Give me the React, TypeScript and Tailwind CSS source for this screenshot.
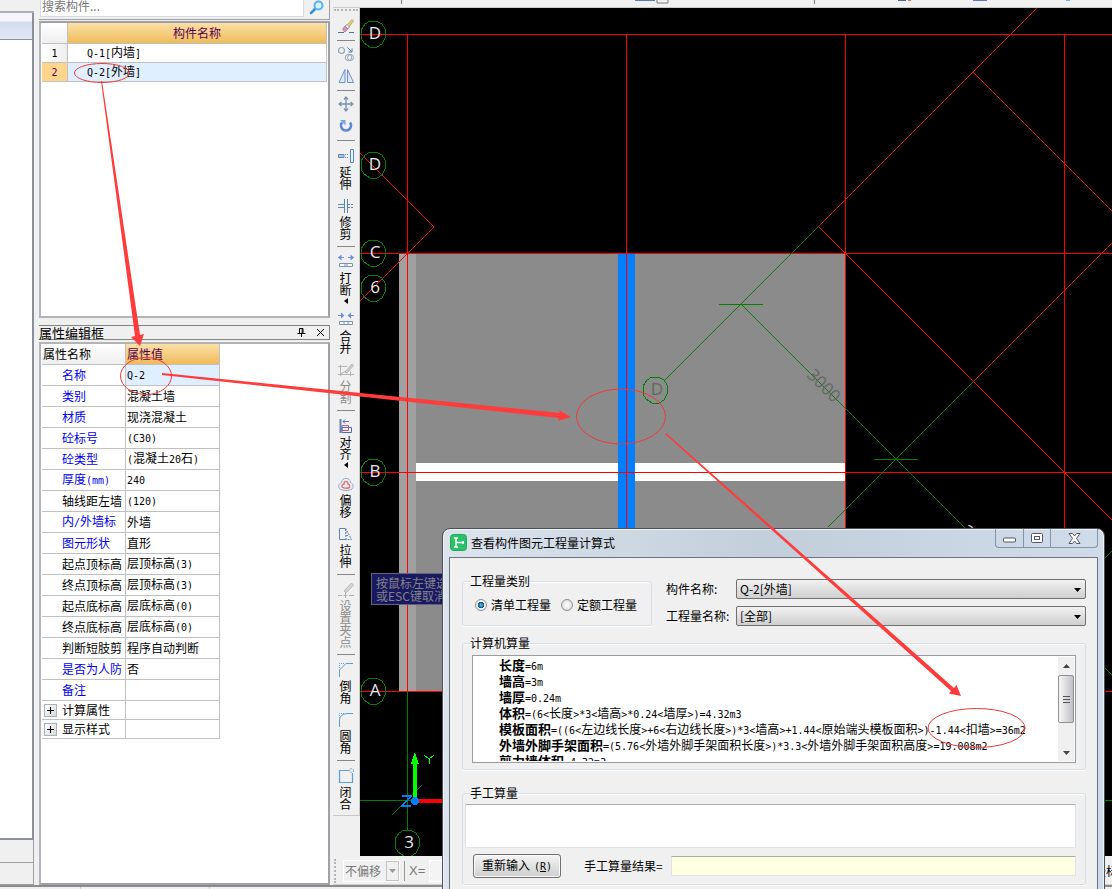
import { useState, type ReactNode } from "react";

type PropertyRow = {
  name: string;
  value: string;
  tone: "blue" | "black";
};

const components = ["Q-1[内墙]", "Q-2[外墙]"];

const properties: PropertyRow[] = [
  { name: "名称", value: "Q-2", tone: "blue" },
  { name: "类别", value: "混凝土墙", tone: "blue" },
  { name: "材质", value: "现浇混凝土", tone: "blue" },
  { name: "砼标号", value: "(C30)", tone: "blue" },
  { name: "砼类型", value: "(混凝土20石)", tone: "blue" },
  { name: "厚度(mm)", value: "240", tone: "blue" },
  { name: "轴线距左墙", value: "(120)", tone: "black" },
  { name: "内/外墙标", value: "外墙", tone: "blue" },
  { name: "图元形状", value: "直形", tone: "blue" },
  { name: "起点顶标高", value: "层顶标高(3)", tone: "black" },
  { name: "终点顶标高", value: "层顶标高(3)", tone: "black" },
  { name: "起点底标高", value: "层底标高(0)", tone: "black" },
  { name: "终点底标高", value: "层底标高(0)", tone: "black" },
  { name: "判断短肢剪", value: "程序自动判断", tone: "black" },
  { name: "是否为人防", value: "否", tone: "blue" },
  { name: "备注", value: "", tone: "blue" },
];

const propertyGroups = ["计算属性", "显示样式"];

const formulas = [
  { label: "长度", expression: "=6m" },
  { label: "墙高", expression: "=3m" },
  { label: "墙厚", expression: "=0.24m" },
  { label: "体积", expression: "=(6<长度>*3<墙高>*0.24<墙厚>)=4.32m3" },
  {
    label: "模板面积",
    expression: "=((6<左边线长度>+6<右边线长度>)*3<墙高>+1.44<原始端头模板面积>)-1.44<扣墙>=36m2",
  },
  {
    label: "外墙外脚手架面积",
    expression: "=(5.76<外墙外脚手架面积长度>)*3.3<外墙外脚手架面积高度>=19.008m2",
  },
  { label: "剪力墙体积", expression: "=4.32m3" },
];

export default function App() {
  return (
    <div className="relative flex h-screen flex-col overflow-hidden bg-[#f0f0f0] font-['Noto_Sans_CJK_SC',sans-serif] text-xs leading-4 text-black">
      <div className="flex min-h-0 flex-1">
        <NavigatorEdge />
        <aside className="ml-[5px] flex w-[291px] shrink-0 flex-col">
          <ComponentList />
          <PropertyEditor />
        </aside>
        <main className="ml-[3px] flex min-w-0 flex-1 flex-col">
          <TopStrip />
          <div className="flex min-h-0 flex-1">
            <EditToolbar />
            <DrawingCanvas />
          </div>
          <OffsetBar />
        </main>
      </div>
      <div className="flex h-1 shrink-0 gap-32 border-t-2 border-[#8c8c8c] bg-[#f0f0f0] pl-20">
        <span className="w-px bg-[#c8c8c8]" />
        <span className="w-px bg-[#c8c8c8]" />
      </div>
      <FormulaDialog />
      <Annotations />
    </div>
  );
}

// Latin runs use a half-width mono face so that they line up with the CJK grid
function Mixed({ text }: { text: string }) {
  return (
    <>
      {text.split(/([\x20-\x7e]+)/).map((part, index) =>
        index % 2 === 1 ? (
          <span key={index} className="font-['DejaVu_Sans_Mono',monospace] text-[10px]">
            {part}
          </span>
        ) : (
          part
        )
      )}
    </>
  );
}

function NavigatorEdge() {
  return (
    <div className="flex w-[34px] shrink-0 flex-col">
      <div className="h-[13px] border-b-2 border-[#b0b0b0]" />
      <div className="h-[27px] border-r-2 border-b border-[#8a8f99] bg-linear-to-b from-[#f4f6fb] from-30% via-[#d3dcee] via-35% to-[#e2e7f4]" />
      <div className="flex-1 border-r-2 border-b-2 border-[#8a8f99] bg-white" />
      <div className="h-[23px] border-r border-b border-[#a0a0a0]" />
      <div className="h-[22px] border-r border-b border-[#a0a0a0]" />
    </div>
  );
}

function ComponentList() {
  const [selected, setSelected] = useState(1);

  return (
    <>
      <div className="flex h-5 shrink-0 border-r border-b border-[#a0a0a0]">
        <input
          aria-label="搜索构件"
          placeholder="搜索构件..."
          className="mb-[2px] ml-px w-[264px] border border-t-0 border-[#d5dbe3] bg-white px-px pb-[6px] leading-3 outline-none placeholder:text-[#777]"
        />
        <button type="button" aria-label="搜索" className="flex flex-1 items-start justify-center">
          <svg width="16" height="15" viewBox="0 0 16 15" fill="none">
            <path d="M6.5 8.5 L2 13" stroke="#3b8fd9" strokeWidth="2.6" strokeLinecap="round" />
            <circle cx="9.5" cy="5.5" r="4" fill="#d9f1ff" stroke="#56b3ee" strokeWidth="2" />
          </svg>
        </button>
      </div>
      <div className="mt-px h-[297px] shrink-0 border-2 border-[#a0a0a6] border-b-[#b4b4b4] border-l-[#b4b4bc] bg-white px-px">
        <table className="w-full border-separate border-spacing-0">
          <thead>
            <tr className="h-[21px]">
              <th className="w-[26px] border-r border-b border-[#c0c0c0] bg-linear-to-b from-white to-[#eeeeee] p-0" />
              <th className="border-r border-b border-[#c0c0c0] bg-linear-to-b from-[#fae0a6] to-[#f0bb5a] p-0 font-normal text-[#550055]">
                构件名称
              </th>
            </tr>
          </thead>
          <tbody>
            {components.map((component, index) => (
              <tr key={component} className="h-[19px]" onClick={() => setSelected(index)}>
                <td
                  className={
                    index === selected
                      ? "border-r border-b border-[#c0c0c0] bg-[#ffd58c] p-0 text-center text-[#550055]"
                      : "border-r border-b border-[#c0c0c0] bg-linear-to-r from-white to-[#eeeeee] p-0 text-center"
                  }
                >
                  <Mixed text={String(index + 1)} />
                </td>
                <td
                  className={
                    index === selected
                      ? "border-r border-b border-[#c0c0c0] bg-[#e0efff] py-0 pl-[19px]"
                      : "border-r border-b border-[#c0c0c0] py-0 pl-[19px]"
                  }
                >
                  <Mixed text={component} />
                </td>
              </tr>
            ))}
          </tbody>
        </table>
      </div>
    </>
  );
}

function PropertyEditor() {
  return (
    <>
      <div className="mt-[7px] flex h-[15px] shrink-0 items-center border border-l-0 border-[#7f857f]">
        <h2 className="flex-1 text-[13px] leading-3">属性编辑框</h2>
        <button type="button" aria-label="固定" className="mr-2 p-px">
          <svg width="9" height="9" viewBox="0 0 9 9" fill="none" stroke="#000">
            <path d="M2.5 0.5 H6 M2.5 0.5 V5 M6 0.5 V5 M5.2 0.5 V5 M0.5 5.5 H8.5 M4.5 6 V9" />
          </svg>
        </button>
        <button type="button" aria-label="关闭" className="mr-[3px] p-px">
          <svg width="9" height="9" viewBox="0 0 9 9" stroke="#000">
            <path d="M1 1 L8 8 M8 1 L1 8" />
          </svg>
        </button>
      </div>
      <div className="mt-[2px] min-h-0 flex-1 overflow-hidden border-2 border-[#a0a0a6] border-t-[#b4b4b4] border-l-[#b4b4bc] bg-white pl-px">
        <table className="w-[178px] table-fixed border-separate border-spacing-0 whitespace-nowrap">
          <thead>
            <tr className="h-[21px] text-left">
              <th className="w-[84px] border-r border-b border-[#c0c0c0] bg-linear-to-b from-white to-[#eeeeee] p-0 pl-px font-normal">
                属性名称
              </th>
              <th className="border-r border-b border-[#c0c0c0] bg-linear-to-b from-[#fae0a6] to-[#f0bb5a] p-0 pl-px font-normal text-[#550055]">
                属性值
              </th>
            </tr>
          </thead>
          <tbody>
            {properties.map((property, index) => (
              <tr key={property.name} className="h-[21px]">
                <td
                  className={
                    property.tone === "blue"
                      ? "border-r border-b border-[#c0c0c0] py-0 pl-5 text-[#0000f0]"
                      : "border-r border-b border-[#c0c0c0] py-0 pl-5"
                  }
                >
                  <Mixed text={property.name} />
                </td>
                <td
                  className={
                    index === 0
                      ? "border-r border-b border-[#c0c0c0] bg-[#e0efff] py-0 pl-px"
                      : "border-r border-b border-[#c0c0c0] py-0 pl-px"
                  }
                >
                  <Mixed text={property.value} />
                </td>
              </tr>
            ))}
            {propertyGroups.map((group) => (
              <tr key={group} className="h-[19px]">
                <td className="border-r border-b border-[#c0c0c0] p-0">
                  <div className="flex items-center gap-[5px] pl-[2px]">
                    <button
                      type="button"
                      aria-label={`展开${group}`}
                      className="flex size-[13px] items-center justify-center border border-[#a8b0b8] bg-linear-to-br from-white to-[#d8d8d8]"
                    >
                      <svg width="7" height="7" viewBox="0 0 7 7" stroke="#000">
                        <path d="M0 3.5 H7 M3.5 0 V7" />
                      </svg>
                    </button>
                    {group}
                  </div>
                </td>
                <td className="border-r border-b border-[#c0c0c0] p-0" />
              </tr>
            ))}
          </tbody>
        </table>
      </div>
    </>
  );
}

function TopStrip() {
  return (
    <div className="h-2 shrink-0 border-b border-[#c8c8c8]">
      <svg width="100%" height="6">
        <path d="M68.5 0 V4 M481.5 0 V4" stroke="#7a7a7a" />
        <path d="M324 0 V3 H335 V0" fill="none" stroke="#7a7a7a" />
        <path d="M302 0.5 H322 M640 0.5 H654" stroke="#5b7cae" />
        <path d="M565 0.5 H573" stroke="#4b66a0" />
        <path d="M575 0.5 H578" stroke="#c07a70" />
        <path d="M733 0.5 H737" stroke="#6fb0e0" />
      </svg>
    </div>
  );
}

function ToolIcon({ children }: { children: ReactNode }) {
  return (
    <svg width="16" height="16" viewBox="0 0 16 16" fill="none" stroke="#5c86b8" className="shrink-0">
      {children}
    </svg>
  );
}

function IconTool({ label, children }: { label: string; children: ReactNode }) {
  return (
    <button type="button" aria-label={label} className="flex h-[22px] items-center">
      <ToolIcon>{children}</ToolIcon>
    </button>
  );
}

function TextTool({
  label,
  disabled,
  menu,
  children,
}: {
  label: string;
  disabled?: boolean;
  menu?: boolean;
  children: ReactNode;
}) {
  return (
    <button
      type="button"
      disabled={disabled}
      className="flex flex-col items-center gap-[2px] pt-[5px] pb-[3px] disabled:text-[#8c8c8c]"
    >
      <ToolIcon>{children}</ToolIcon>
      <span className="mr-[2px] [writing-mode:vertical-rl]">{label}</span>
      {menu ? (
        <svg width="4" height="6" viewBox="0 0 4 6">
          <path d="M4 0 V6 L0 3 Z" fill="#000" />
        </svg>
      ) : null}
    </button>
  );
}

function Divider() {
  return (
    <div className="flex h-[6px] w-full shrink-0 items-center px-1">
      <span className="h-px w-full bg-[#858585]" />
    </div>
  );
}

function EditToolbar() {
  return (
    <div className="flex w-[27px] shrink-0 flex-col">
      <div className="flex flex-col items-center border-r border-b border-[#c8c8c8] pb-[2px]">
        <div className="mt-px mb-1 h-[2px] w-6 border-t-2 border-dotted border-[#b4b4b4]" />
        <IconTool label="删除">
          <path d="M0 14.5 H6 M11 14.5 H16" stroke="#55719c" />
          <path d="M9 7 L14 1.5 L15.5 3 L11 9 Z" fill="#f0cf62" stroke="#a8905a" strokeWidth="0.7" />
          <path d="M7 8 L9 6.5 L11.5 9 L10 11 Z" fill="#e8eef6" stroke="#7f95b5" strokeWidth="0.8" />
          <path d="M4.5 11 L7 8 L10 11 L7.5 13.5 H6 Z" fill="#e58ab0" stroke="#8f6fa0" strokeWidth="0.6" />
        </IconTool>
        <Divider />
        <IconTool label="复制">
          <circle cx="3.5" cy="4.5" r="3" stroke="#8fa3ba" strokeWidth="1.2" />
          <circle cx="10.5" cy="11.5" r="3.2" stroke="#8fa3ba" />
          <circle cx="12.5" cy="11.5" r="3" stroke="#8fa3ba" />
          <path d="M9.500 1.500 L13.500 5.500 M14 2.500 V6 H10.500" stroke="#4f74b8" />
        </IconTool>
        <IconTool label="镜像">
          <path d="M7 1.500 V14.500 H1 Z M9.500 1.500 V14.500 H15.500 Z" fill="#dfe9f7" stroke="#6d8fcc" />
        </IconTool>
        <Divider />
        <IconTool label="移动">
          <path
            d="M8 1 V15 M1 8 H15 M6 3.500 L8 1 L10 3.500 M6 12.500 L8 15 L10 12.500 M3.500 6 L1 8 L3.500 10 M12.500 6 L15 8 L12.500 10"
            stroke="#7893b4"
            strokeWidth="1.3"
          />
        </IconTool>
        <IconTool label="旋转">
          <path d="M12 4.500 A5 5 0 1 1 4 4.500" stroke="#5c86d8" strokeWidth="2.600" />
          <path d="M2 2 H7.500 V7.500 Z" fill="#7ea2e0" stroke="none" />
        </IconTool>
        <Divider />
        <TextTool label="延伸">
          <path d="M0.500 6.500 H6 V9.500 H0.500 Z" fill="#a8c8ec" />
          <path d="M7 6.500 H11 M7 9.500 H11" strokeDasharray="1 1" />
          <path d="M12.500 1.500 H15.500 V14.500 H12.500 Z" fill="#e8f1fb" />
        </TextTool>
        <TextTool label="修剪">
          <path d="M0 6.500 H6 M0 9.500 H6" />
          <path d="M6.500 1 V15 M9.500 1 V15" />
          <path d="M10 6.500 H16 M10 9.500 H16" strokeDasharray="2 1" />
        </TextTool>
        <Divider />
        <TextTool label="打断" menu>
          <path d="M0 3.500 H6 M10 3.500 H16" stroke="#6c8fd8" />
          <path d="M3.500 0.500 V6.500 L0 3.500 Z M12.500 0.500 V6.500 L16 3.500 Z" fill="#6c8fd8" stroke="none" />
          <path d="M1.500 9.500 H14.500 V12.500 H1.500 Z M7 9.500 V12.500 M9 9.500 V12.500" fill="#fff" stroke="#7893b4" />
        </TextTool>
        <TextTool label="合并">
          <path d="M0 3.500 H6 M10 3.500 H16" stroke="#6c8fd8" />
          <path d="M3 0.500 V6.500 L6.500 3.500 Z M13 0.500 V6.500 L9.500 3.500 Z" fill="#6c8fd8" stroke="none" />
          <path d="M1.500 9.500 H14.500 V12.500 H1.500 Z M6 9.500 V12.500 M10 9.500 V12.500" fill="#fff" stroke="#7893b4" />
        </TextTool>
        <TextTool label="分割" disabled>
          <path d="M0 4.500 H9 M0 12.500 H16 M2.500 3 V14 M12.500 9 V14 M2.500 12 L8 9" stroke="#b4b4b4" />
          <path d="M7 10 L14 2 L15.500 3.500 L9 11 Z" fill="#d0d0d0" stroke="#b4b4b4" />
        </TextTool>
        <Divider />
        <TextTool label="对齐" menu>
          <path d="M2.500 1 V15" strokeWidth="2" />
          <path d="M5 3.500 H11 M7 1.500 L5 3.500 L7 5.500" stroke="#5c6fc0" />
          <path d="M4 7.500 H10.500 V12.500 H4 Z" stroke="#c05a6a" />
          <path d="M4 9.500 H13.500 V14.500 H4 Z" stroke="#4f68c0" />
        </TextTool>
        <TextTool label="偏移">
          <path d="M1.500 12.500 C-0.500 9.500 2 7 3.500 6.500 C4 1 12 1 12.500 6.500 C15.500 8 15.500 11 14 13 C11 15 4 15 1.500 12.500 Z" stroke="#8aa8cc" />
          <path d="M4 11 C3.500 9 5 8 6 8 C6 4.500 10 4.500 10 8 C12 8.500 12 10.500 11.500 11.500 C9 12.500 6 12.500 4 11 Z" fill="#fbe6e6" stroke="#d87a80" strokeWidth="1.400" />
        </TextTool>
        <TextTool label="拉伸">
          <path d="M7 2.500 H1.500 V13.500 H8" />
          <path d="M7.500 2 L13.500 13.500 H8 Z M8 6 H9 M8 9.500 H11" strokeDasharray="2 1" />
        </TextTool>
        <Divider />
        <TextTool label="设置夹点" disabled>
          <path d="M0 13.500 H4 M11 13.500 H16 M7.500 10 V16 M5.500 13.500 H9.500" stroke="#b0b0b0" />
          <path d="M6 9 L13.500 1 L15.500 3 L8.500 10.500 Z" fill="#d4d4d4" stroke="#b8b8b8" />
        </TextTool>
        <Divider />
        <TextTool label="倒角">
          <path d="M1.500 15 V8 L8 1.500 H15" stroke="#5b9fd8" />
          <path d="M1.500 6 V1.500 H7" stroke="#5b9fd8" strokeDasharray="1 1" />
        </TextTool>
        <TextTool label="圆角">
          <path d="M1.500 15 V8 Q2 2 9 1.500 H15" stroke="#5b9fd8" />
          <path d="M1.500 6 V1.500 H7" stroke="#5b9fd8" strokeDasharray="1 1" />
        </TextTool>
        <Divider />
        <TextTool label="闭合">
          <path d="M11 2.500 H1.500 V14.500 H14.500 V5" stroke="#5b9fd8" strokeWidth="1.200" />
          <circle cx="13.500" cy="2.500" r="2" stroke="#5b9fd8" strokeDasharray="1.500 1" />
        </TextTool>
      </div>
    </div>
  );
}

function AxisBubble({ x, y, label, dim }: { x: number; y: number; label: string; dim?: boolean }) {
  return (
    <g>
      <path
        d={`M${x - 12} ${y - 4} l4 -6 l5 -3 h6 l6 3 l3 5 v9 l-3 6 l-5 3 h-7 l-6 -4 l-3 -5 Z`}
        fill="none"
        stroke="#008000"
      />
      <text
        x={x + 2}
        y={y + 5}
        textAnchor="middle"
        fill={dim ? "#5f6a5f" : "#e8e8e8"}
        className="font-['Open_Sans',sans-serif] text-[17px]"
      >
        {label}
      </text>
    </g>
  );
}

function DrawingCanvas() {
  return (
    <section aria-label="绘图区" className="relative min-w-0 flex-1 overflow-hidden bg-black">
      <svg width="100%" height="100%" className="block" shapeRendering="crispEdges">
        {/* model units start at the window corner, the canvas is inset by the toolbars */}
        <g transform="translate(-360 -8)">
          <rect x="399" y="253" width="17" height="438" fill="#a0a0a0" />
          <rect x="416" y="253" width="430" height="438" fill="#8b8b8b" />
          <rect x="416" y="463" width="430" height="18" fill="#fff" />
          <rect x="618" y="253" width="17" height="438" fill="#007fff" />

          <g stroke="#ff0000" fill="none">
            <path d="M360 34.500 H1112 M360 253.500 H1112 M360 472.500 H1112 M360 691.500 H1112" />
            <path d="M407.500 35 V691 M626.500 35 V691 M845.500 35 V691 M1064.500 35 V691" />
            <path d="M360 153 L434 227 L360 301" />
            <path d="M1036.500 8.500 L818.500 226.500" />
            <path d="M819 227 L1112 520" />
            <path d="M973 72 L1112 211" />
            <path d="M974 381 L1112 243" />
          </g>

          <g stroke="#008000" fill="none">
            <path d="M818.500 226.500 L663.500 381.500" />
            <path d="M741 304 L968 531 M974 381 L828 527" />
            <path d="M719 304.500 H763 M874 459.500 H918" />
            <path d="M407.500 691 V830 M360 800.500 H1112 M392 815 L422 785" />
            <path d="M1104 559 L1112 551 M1104 667 L1112 675" />
          </g>

          <text
            transform="translate(806 376) rotate(45)"
            fill="#666666"
            className="font-['Open_Sans',sans-serif] text-[17px]"
          >
            3000
          </text>
          <text
            transform="translate(960 532) rotate(45)"
            fill="#c8c8c8"
            className="font-['Open_Sans',sans-serif] text-[17px]"
          >
            3
          </text>

          <AxisBubble x={373} y={34} label="D" />
          <AxisBubble x={373} y={165} label="D" />
          <AxisBubble x={373} y={253} label="C" />
          <AxisBubble x={373} y={288} label="6" />
          <AxisBubble x={373} y={472} label="B" />
          <AxisBubble x={373} y={691} label="A" />
          <AxisBubble x={407} y={843} label="3" />
          <AxisBubble x={655} y={390} label="D" dim />

          <path d="M415 801 H445" stroke="#ff0000" strokeWidth="4" />
          <path d="M415 800 V764" stroke="#00ff00" strokeWidth="4" />
          <path d="M415 752 L419 764 H411 Z" fill="#00ff00" />
          <path d="M424 755 L429 759 L434 755 M429 759 V764" fill="none" stroke="#00ff00" />
          <path d="M402 796 H411 L402 806 H411" fill="none" stroke="#007fff" strokeWidth="1.500" />
          <circle cx="415" cy="801" r="4" fill="#007fff" />
        </g>
      </svg>
      <div className="absolute top-[565px] left-[11px] border border-[#62627c] bg-[#191960] px-1 py-[2px] leading-[13px] whitespace-nowrap text-[#83838b]">
        按鼠标左键选择
        <br />
        或ESC键取消命令
      </div>
    </section>
  );
}

function OffsetBar() {
  return (
    <div className="flex h-[29px] shrink-0 items-center gap-1 border-b border-[#d0d0d0] pt-px pl-px text-[#7a7a7a]">
      <span className="h-6 border-l-2 border-dotted border-[#b4b4b4]" />
      <div className="ml-[3px] flex items-center border border-white">
        <span className="w-[42px] pl-px">不偏移</span>
        <button type="button" aria-label="偏移方式" className="flex h-5 w-[13px] items-center justify-center border border-[#c4c4c4]">
          <svg width="7" height="4" viewBox="0 0 7 4">
            <path d="M0 0 H7 L3.500 4 Z" fill="#9a9a9a" />
          </svg>
        </button>
      </div>
      <span className="h-5 border-l border-[#9a9a9a]" />
      <label htmlFor="offset-x" className="font-['Liberation_Sans',sans-serif] text-[13px]">
        X=
      </label>
      <input id="offset-x" className="h-[22px] w-16 border border-white bg-[#f4f4f4] outline-none" />
      <span className="ml-auto w-[18px] overflow-hidden whitespace-nowrap text-black">坐标</span>
    </div>
  );
}

function GroupBox({ title, className, children }: { title: string; className: string; children: ReactNode }) {
  return (
    <fieldset
      className={`min-w-0 rounded-[3px] border border-[#d5dfe5] shadow-[0_1px_0_#ffffff,inset_0_1px_0_#ffffff] ${className}`}
    >
      <legend className="ml-[7px] h-4">{title}</legend>
      {children}
    </fieldset>
  );
}

function SelectField({ id, label, value }: { id: string; label: string; value: string }) {
  return (
    <div className="flex items-center">
      <label htmlFor={id} className="w-[70px] shrink-0">
        {label}
      </label>
      <div className="relative flex-1">
        <select
          id={id}
          className="block h-5 w-full appearance-none rounded-[2px] border border-[#707070] bg-linear-to-b from-[#f2f2f2] to-[#cfcfcf] px-[3px] leading-4 outline-none"
        >
          <option>{value}</option>
        </select>
        <svg width="7" height="4" viewBox="0 0 7 4" className="pointer-events-none absolute top-[9px] right-[5px]">
          <path d="M0 0 H7 L3.500 4 Z" fill="#000" />
        </svg>
      </div>
    </div>
  );
}

function RadioOption({
  label,
  checked,
  onSelect,
}: {
  label: string;
  checked: boolean;
  onSelect: () => void;
}) {
  return (
    <label className="flex items-center gap-1 whitespace-nowrap">
      <input
        type="radio"
        name="quantity-kind"
        checked={checked}
        onChange={onSelect}
        className="size-3 appearance-none rounded-full border border-[#8e8f8f] bg-[radial-gradient(circle,#ffffff,#d0d4d8)] checked:bg-[radial-gradient(circle,#5fd0f5_0,#0f4a7a_42%,#eef2f5_50%)]"
      />
      {label}
    </label>
  );
}

function FormulaDialog() {
  const [kind, setKind] = useState("清单工程量");

  return (
    <div
      role="dialog"
      aria-label="查看构件图元工程量计算式"
      className="absolute top-[528px] right-[7px] -bottom-2 left-[442px] flex flex-col rounded-t-lg border border-[#4a5058] bg-linear-to-r from-[#dbe4ed] via-[#c3cedb] to-[#d0dcea] px-[6px] shadow-[inset_0_0_0_1px_#eef3f8]"
    >
      <header className="flex h-7 shrink-0 items-center gap-1 pb-px pl-px">
        <svg width="17" height="17" viewBox="0 0 17 17">
          <rect x="0.500" y="0.500" width="16" height="16" rx="3" fill="#2cc069" stroke="#1fa858" />
          <path d="M4 4 H8 M4 13 H8 M6 4 V13 M6 8.500 H14 M13 7 V10" fill="none" stroke="#fff" strokeWidth="1.500" />
        </svg>
        <h1 className="flex-1">查看构件图元工程量计算式</h1>
        <div className="flex h-[19px] self-start rounded-b-[4px] border border-t-0 border-[#8794a3]">
          <button type="button" aria-label="最小化" className="flex w-7 items-center justify-center border-r border-[#8794a3] pt-1">
            <svg width="13" height="6" viewBox="0 0 13 6">
              <rect x="0.500" y="1" width="12" height="4" rx="1" fill="#fff" stroke="#535666" />
            </svg>
          </button>
          <button type="button" aria-label="最大化" className="flex w-[27px] items-center justify-center border-r border-[#8794a3]">
            <svg width="12" height="10" viewBox="0 0 12 10" fill="#fff" stroke="#535666">
              <rect x="0.500" y="0.500" width="11" height="9" rx="1" />
              <rect x="3.500" y="3.500" width="5" height="3" />
            </svg>
          </button>
          <button type="button" aria-label="关闭" className="flex w-[46px] items-center justify-center">
            <svg width="13" height="11" viewBox="0 0 13 11">
              <path
                d="M1 0.500 H4.500 L6.500 3 L8.500 0.500 H12 L8.500 5.500 L12 10.500 H8.500 L6.500 8 L4.500 10.500 H1 L4.500 5.500 Z"
                fill="#fff"
                stroke="#535666"
              />
            </svg>
          </button>
        </div>
      </header>

      <div className="flex-1 border border-[#6b7480] bg-[#f0f0f0] pt-[15px] pr-[11px] pl-3">
        <div className="flex items-end gap-[14px]">
          <GroupBox title="工程量类别" className="h-[53px] w-[190px] shrink-0">
            <div className="flex gap-[10px] pt-2 pl-3">
              {["清单工程量", "定额工程量"].map((option) => (
                <RadioOption
                  key={option}
                  label={option}
                  checked={kind === option}
                  onSelect={() => setKind(option)}
                />
              ))}
            </div>
          </GroupBox>
          <div className="flex flex-1 flex-col gap-[7px]">
            <SelectField id="component-name" label="构件名称:" value="Q-2[外墙]" />
            <SelectField id="quantity-name" label="工程量名称:" value="[全部]" />
          </div>
        </div>

        <GroupBox title="计算机算量" className="mt-[9px]">
          <div className="mx-[9px] mt-1 mb-[6px] flex h-[108px] border border-[#9a9ca3] bg-white p-px">
            <div className="min-w-0 flex-1 overflow-hidden pl-[25px] whitespace-nowrap">
              {formulas.map((formula) => (
                <p key={formula.label} className="h-4 leading-4">
                  <strong className="text-[13px] font-bold">{formula.label}</strong>
                  <Mixed text={formula.expression} />
                </p>
              ))}
            </div>
            <div className="flex w-4 flex-col bg-[#f0f0f0]">
              <button type="button" aria-label="向上滚动" className="flex h-[18px] items-center justify-center">
                <svg width="7" height="4" viewBox="0 0 7 4">
                  <path d="M0 4 L3.500 0 L7 4 Z" fill="#444" />
                </svg>
              </button>
              <div className="flex h-12 flex-col items-center justify-center gap-[2px] rounded-[2px] border border-[#8f8f8f] bg-linear-to-r from-[#f6f6f6] to-[#c2c2c6]">
                <span className="h-px w-[7px] bg-[#555]" />
                <span className="h-px w-[7px] bg-[#555]" />
                <span className="h-px w-[7px] bg-[#555]" />
              </div>
              <button type="button" aria-label="向下滚动" className="mt-auto flex h-[17px] items-center justify-center">
                <svg width="7" height="4" viewBox="0 0 7 4">
                  <path d="M0 0 L3.500 4 L7 0 Z" fill="#444" />
                </svg>
              </button>
            </div>
          </div>
        </GroupBox>

        <GroupBox title="手工算量" className="mt-[15px]">
          <div className="mt-[3px] mr-[9px] mb-[6px] ml-[2px]">
            <textarea
              aria-label="手工算量"
              className="block h-11 w-full resize-none border border-[#e2e3ea] border-t-[#abadb3] bg-white outline-none"
            />
            <div className="mt-[6px] flex items-center pl-2">
              <button
                type="button"
                className="h-6 w-[88px] rounded-[3px] border border-[#707070] bg-linear-to-b from-[#f4f4f4] to-[#cfcfcf] shadow-[inset_0_0_0_1px_#fbfbfb]"
              >
                重新输入
                <span className="ml-1 font-['DejaVu_Sans_Mono',monospace] text-[10px]">
                  (<u>R</u>)
                </span>
              </button>
              <label htmlFor="manual-result" className="mr-2 ml-[23px]">
                手工算量结果=
              </label>
              <input
                id="manual-result"
                className="h-5 min-w-0 flex-1 border border-[#e2e3ea] border-t-[#abadb3] bg-[#ffffe1] outline-none"
              />
            </div>
          </div>
        </GroupBox>
      </div>
    </div>
  );
}

function Annotations() {
  return (
    <svg width="100%" height="100%" className="pointer-events-none absolute inset-0" aria-hidden="true">
      <g fill="#ff3b3b">
        <path d="M101 81 L135 336 L131 337 L140 346 L144 334 L140 335 L102 81 Z" />
        <path d="M162 373 L560 413 L559 410 L571 417 L558 421 L559 418 L162 375 Z" />
        <path d="M666 433 L954 688 L956.500 685 L961 696 L949 693.500 L951 691 L665 434 Z" />
      </g>
      <g fill="none" stroke="#ee3a3a">
        <ellipse cx="102" cy="73" rx="27.500" ry="9.500" />
        <ellipse cx="146" cy="376" rx="25.500" ry="18.500" />
        <ellipse cx="621" cy="416.500" rx="44.500" ry="27.500" />
        <ellipse cx="976.500" cy="728" rx="48.500" ry="19.500" />
      </g>
    </svg>
  );
}
